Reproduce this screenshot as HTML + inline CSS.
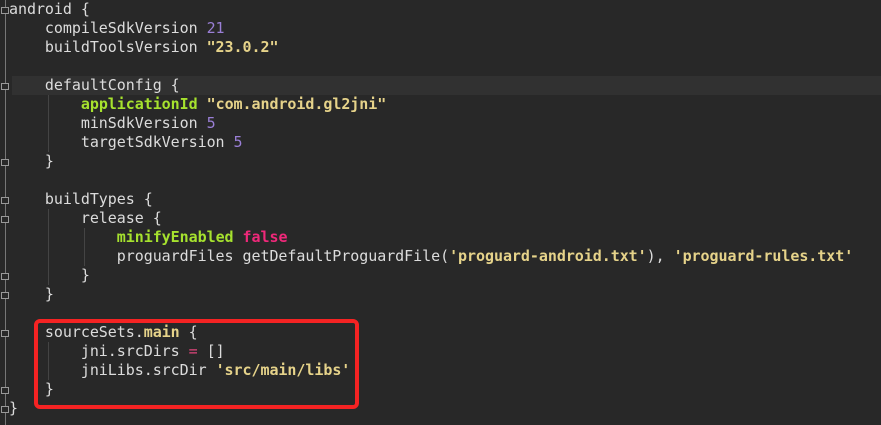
<!DOCTYPE html><html><head><style>
body{margin:0;width:881px;height:425px;background:#282828;overflow:hidden;position:relative}
pre{margin:0;position:absolute;left:9px;top:0;font:15px/19px "DejaVu Sans Mono",monospace;color:#dcdcdc;letter-spacing:-0.05px}
.n{color:#9a7fd6}.s{color:#e6d38a;font-weight:bold}.g{color:#a6e22e;font-weight:bold}.k{color:#f0287a;font-weight:bold}.e{color:#e0457b}
.hl{position:absolute;left:12px;top:76px;width:869px;height:19px;background:#313131}
.gut{position:absolute;left:5px;top:0;width:1px;height:425px;background:#777}
.box{position:absolute;left:34px;top:319px;width:317px;height:82px;border:4px solid #f52323;border-radius:6px}
.gl{position:absolute;width:1px;background:#444}
.f{position:absolute;left:1px;width:8px;height:7px;border:1px solid #999;background:#282828;box-sizing:border-box}
</style></head><body>
<div class="hl"></div>
<div class="gut"></div>
<div class="gl" style="left:48px;top:95px;height:57px"></div>
<div class="gl" style="left:48px;top:209px;height:76px"></div>
<div class="gl" style="left:84px;top:228px;height:38px"></div>
<div class="gl" style="left:48px;top:342px;height:38px"></div>
<div class="f" style="top:7px"></div><div class="f" style="top:83px"></div><div class="f" style="top:159px"></div>
<div class="f" style="top:197px"></div><div class="f" style="top:216px"></div><div class="f" style="top:273px"></div>
<div class="f" style="top:292px"></div><div class="f" style="top:330px"></div><div class="f" style="top:387px"></div><div class="f" style="top:406px"></div>
<pre>android {
    compileSdkVersion <span class="n">21</span>
    buildToolsVersion <span class="s">"23.0.2"</span>

    defaultConfig {
        <span class="g">applicationId</span> <span class="s">"com.android.gl2jni"</span>
        minSdkVersion <span class="n">5</span>
        targetSdkVersion <span class="n">5</span>
    }

    buildTypes {
        release {
            <span class="g">minifyEnabled</span> <span class="k">false</span>
            proguardFiles getDefaultProguardFile(<span class="s">'proguard-android.txt'</span>), <span class="s">'proguard-rules.txt'</span>
        }
    }

    sourceSets.<span class="s">main</span> {
        jni.srcDirs <span class="e">=</span> []
        jniLibs.srcDir <span class="s">'src/main/libs'</span>
    }
}</pre>
<div class="box"></div>
</body></html>
